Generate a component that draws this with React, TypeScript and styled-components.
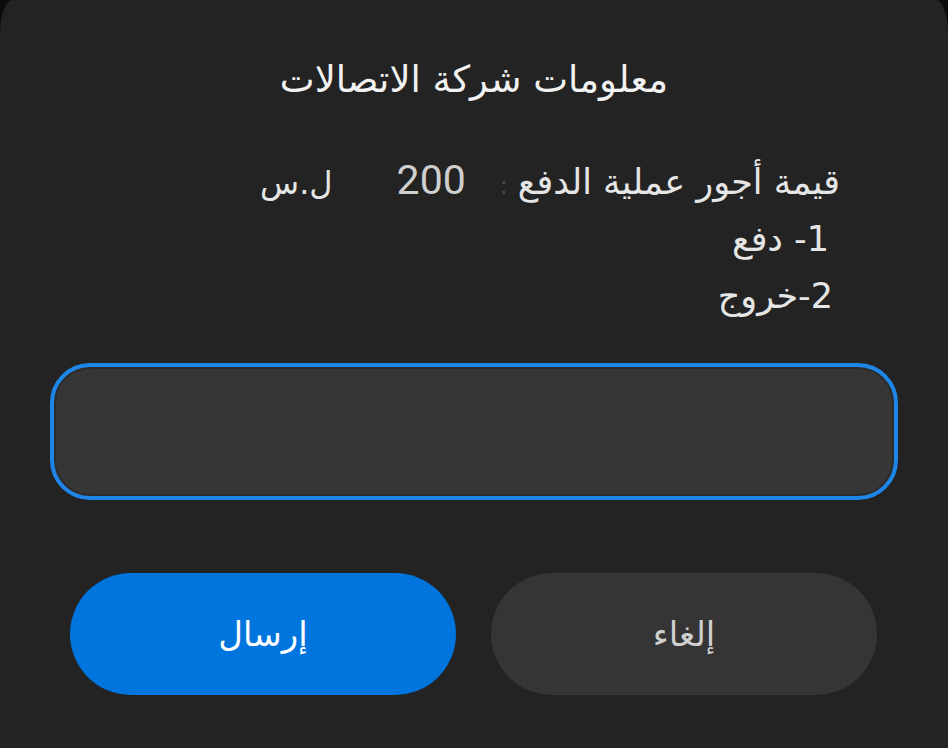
import React from 'react'
import styled, { createGlobalStyle } from 'styled-components';

const GlobalStyle = createGlobalStyle`
  html, body {
    margin: 0;
    padding: 0;
    background: #0b0b0b;
    overflow: hidden;
  }
`

export default function App() {
  return (
    <>
      <GlobalStyle />
      <Dialog dir="rtl">
        <Title>معلومات شركة الاتصالات</Title>
        <Message>
          <Line>
            قيمة أجور عملية الدفع<Colon>:</Colon>
            <Amount>200</Amount>
            <Currency>ل.س</Currency>
          </Line>
          <Line indent={11}>1- دفع</Line>
          <Line indent={7}>2-خروج</Line>
        </Message>
        <Input type="text" />
        <Actions>
          <Button>إلغاء</Button>
          <Button primary>إرسال</Button>
        </Actions>
      </Dialog>
    </>
  );
}

const Dialog = styled.div`
  background-color: #232323;
  height: 748px;
  box-sizing: border-box;
  border-radius: 12px 12px 0 0 / 35px 35px 0 0;
  padding: 51px 0 0;
  display: flex;
  flex-direction: column;
  font-family: "DejaVu Sans", "Noto Sans", sans-serif;
`
const Title = styled.h2`
  margin: 0;
  font-size: 37px;
  font-weight: normal;
  line-height: 58px;
  color: #f2f2f2;
  text-align: center;
`
const Message = styled.div`
  margin-top: 45px;
  padding-right: 108px;
  color: #e6e6e6;
  font-size: 35px;
  text-align: right;
`
const Line = styled.div<{ indent?: number }>`
  height: 57px;
  line-height: 57px;
  padding-right: ${p => p.indent ?? 0}px;
  white-space: nowrap;
`
const Colon = styled.span`
  color: #4a4a4a;
  margin: 0 10px 0 4px;
  font-size: 24px;
`
const Amount = styled.span`
  font-family: Roboto, "Liberation Sans", sans-serif;
  color: #cfcfcf;
  font-size: 41px;
  line-height: 1;
  margin: 0 30px 0 64px;
`
const Currency = styled.span`
  font-size: 32px;
`

const Input = styled.input`
  margin: 38px 50px 0;
  height: 137px;
  box-sizing: border-box;
  border: 4px solid #1d86e8;
  border-radius: 40px;
  background: #363636;
  box-shadow: inset 0 0 0 2px #2c2c2c;
  outline: none;
`
const Actions = styled.div`
  margin-top: 73px;
  padding: 0 71px 0 70px;
  display: flex;
  gap: 35px;
`
const Button = styled.button<{ primary?: boolean }>`
  flex: 1;
  height: 122px;
  border: none;
  border-radius: 61px;
  background: ${p => (p.primary ? '#0075de' : '#353535')};
  color: ${p => (p.primary ? '#ffffff' : '#cfcfcf')};
  font-family: "DejaVu Sans", "Noto Sans", sans-serif;
  font-size: 34px;
`
